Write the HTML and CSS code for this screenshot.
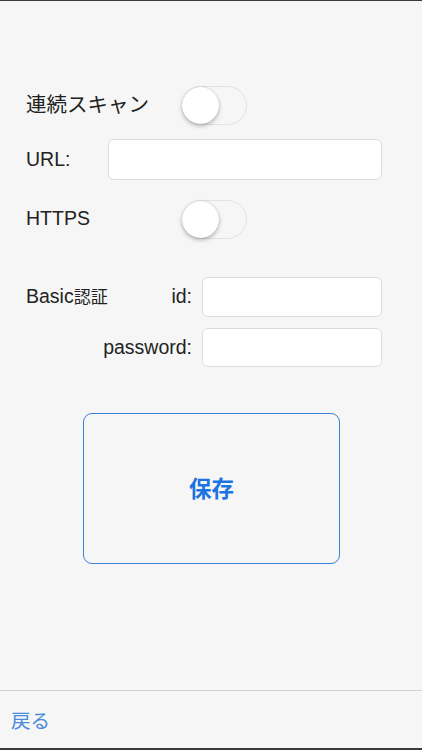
FILE: index.html
```html
<!DOCTYPE html>
<html lang="ja">
<head>
    <meta charset="UTF-8">
    <meta name="viewport" content="width=device-width, initial-scale=1.0">
    <title>設定</title>
    <link rel="stylesheet" href="styles.css">
</head>
<body>
    <div class="screen">
        <div class="main">
            <div class="row row-scan">
                <span class="label label-wide label-ja">連続スキャン</span>
                <div class="switch"><div class="knob"></div></div>
            </div>
            <div class="row row-url">
                <span class="label label-url">URL:</span>
                <input type="text" class="field field-url">
            </div>
            <div class="row row-https">
                <span class="label label-wide">HTTPS</span>
                <div class="switch"><div class="knob"></div></div>
            </div>
            <div class="row row-id">
                <span class="label label-basic">Basic<span class="kanji">認証</span></span>
                <span class="label label-sub label-id">id:</span>
                <input type="text" class="field field-auth">
            </div>
            <div class="row row-pass">
                <span class="label label-sub label-pass">password:</span>
                <input type="password" class="field field-auth">
            </div>
            <button type="button" class="save">保存</button>
        </div>
        <div class="footer">
            <a class="back">戻る</a>
        </div>
    </div>
</body>
</html>
```

FILE: styles.css
```css
body {
    margin: 0;
    padding: 0;
    background-color: #f6f6f6;
    font-family: "Liberation Sans", "Noto Sans CJK JP", sans-serif;
    color: #222;
}
.screen {
    height: 750px;
    box-sizing: border-box;
    display: flex;
    flex-direction: column;
    border-top: 1px solid #3a3a3a;
    border-bottom: 2px solid #3a3a3a;
}
.main {
    flex: 1;
    display: flex;
    flex-direction: column;
}
.row {
    display: flex;
    align-items: center;
    padding-left: 26px;
}
.row-scan {
    margin-top: 85px;
    height: 39px;
}
.row-url {
    margin-top: 14px;
    height: 41px;
}
.row-https {
    margin-top: 19px;
    height: 40px;
}
.row-id {
    margin-top: 38px;
    height: 40px;
}
.row-pass {
    margin-top: 11px;
    height: 39px;
}
.label {
    font-size: 19.5px;
    line-height: 1;
    white-space: nowrap;
    flex-shrink: 0;
}
.label-ja {
    font-size: 20.5px;
}
.kanji {
    font-size: 17px;
}
.label-wide {
    width: 156px;
}
.label-url {
    width: 82px;
}
.label-basic {
    width: 84px;
}
.label-sub {
    text-align: right;
    margin-right: 10px;
}
.label-id {
    width: 82px;
}
.label-pass {
    width: 166px;
}
.field {
    box-sizing: border-box;
    background: #fff;
    border: 1px solid #dcdcdc;
    border-radius: 6px;
    height: 100%;
    margin: 0;
    padding: 0 8px;
    font-size: 18px;
}
.field-url {
    width: 274px;
}
.field-auth {
    width: 180px;
}
.switch {
    box-sizing: border-box;
    width: 65px;
    height: 39px;
    border: 1.5px solid #e2e2e2;
    border-radius: 20px;
    background: #f6f6f6;
    display: flex;
    align-items: center;
}
.knob {
    width: 37px;
    height: 37px;
    margin-left: -1px;
    border-radius: 50%;
    background: #fff;
    box-shadow: 0 2px 4px rgba(0, 0, 0, 0.28), 0 0 1px rgba(0, 0, 0, 0.2);
}
.save {
    align-self: flex-start;
    margin: 46px 0 0 83px;
    width: 257px;
    height: 151px;
    box-sizing: border-box;
    background: transparent;
    border: 1.5px solid #3d7fd6;
    border-radius: 9px;
    color: #1b74e0;
    font-family: "Noto Sans CJK JP", sans-serif;
    font-size: 22.5px;
    font-weight: 700;
    padding: 0 0 4px;
}
.footer {
    height: 58px;
    box-sizing: border-box;
    border-top: 1px solid #d2d2d2;
    display: flex;
    align-items: center;
    padding-left: 11px;
}
.back {
    font-family: "Noto Sans CJK JP", sans-serif;
    font-size: 19.5px;
    color: #4a8bdb;
}
```
